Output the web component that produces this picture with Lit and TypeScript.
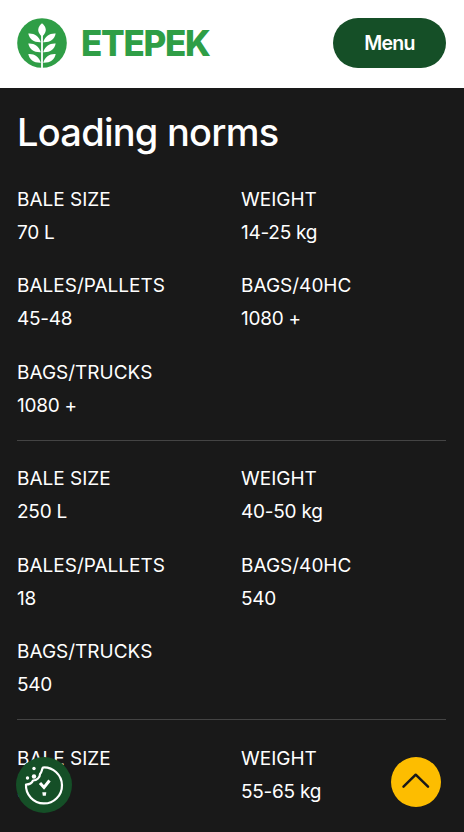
import { LitElement, html, css, svg } from "lit";
import { customElement } from "lit/decorators.js";

const rows = [
  { size: "70 L", weight: "14-25 kg", pallets: "45-48", hc: "1080 +", trucks: "1080 +" },
  { size: "250 L", weight: "40-50 kg", pallets: "18", hc: "540", trucks: "540" },
  { size: "350 L", weight: "55-65 kg", pallets: "18", hc: "540", trucks: "540" },
];

const pair = (y: number) => svg`
  <path transform="translate(0 ${y})" d="M11.300 15.500C17 15 22 18 23.800 24.200C17 24.500 12.500 21.500 11.300 15.500Z" fill="#fff"></path>
  <path transform="translate(50 ${y}) scale(-1 1)" d="M11.300 15.500C17 15 22 18 23.800 24.200C17 24.500 12.500 21.500 11.300 15.500Z" fill="#fff"></path>`;

@customElement("app-root")
export class AppRoot extends LitElement {
  static styles = css`
    :host { display: block; width: 464px; height: 832px; overflow: hidden; position: relative; background: #191919; font-family: Inter, "Noto Sans", sans-serif; color: #fff; }
    header { height: 88px; background: #fff; display: flex; align-items: center; justify-content: space-between; padding: 0 18px 2px 17px; box-sizing: border-box; }
    .brand { display: flex; align-items: center; gap: 14px; }
    .logo { width: 50px; height: 50px; display: block; }
    .name { font-size: 35px; font-weight: 800; color: #2f9e46; letter-spacing: -1.3px; line-height: 1; }
    .menu { width: 113px; height: 50px; border-radius: 25px; background: #154f27; color: #fff; display: flex; align-items: center; justify-content: center; font-size: 19.5px; font-weight: 600; letter-spacing: -0.7px; }
    main { padding: 0 18px 0 17px; }
    h1 { margin: 0; padding-top: 20.5px; font-size: 38px; line-height: 46px; font-weight: 500; letter-spacing: -0.75px; }
    .row { display: grid; grid-template-columns: 224px 1fr; row-gap: 20px; padding: 21.5px 0 17.5px; border-bottom: 1px solid #444; }
    .row:first-of-type { padding-top: 28.1px; }
    .label, .value { font-size: 19px; line-height: 33.25px; font-weight: 400; }
    .label { letter-spacing: 0; }
    .value { letter-spacing: -0.25px; }
    .fab { position: absolute; border-radius: 50%; display: flex; align-items: center; justify-content: center; }
    .cookie { left: 16px; top: 757px; width: 56px; height: 56px; background: #154f27; }
    .top { left: 391px; top: 757px; width: 50px; height: 50px; background: #fdbd00; }
    svg { display: block; }
  `;

  render() {
    return html`
      <header>
        <div class="brand">
          <svg class="logo" viewBox="0 0 50 50">
            <circle cx="25" cy="25" r="24.800" fill="#2f9e46"></circle>
            <rect x="24.100" y="17" width="1.800" height="33" fill="#fff"></rect>
            <path d="M25 5.300C29 8.500 31 13.500 25 18.800C19 13.500 21 8.500 25 5.300Z" fill="#fff"></path>
            ${pair(0)}${pair(10)}${pair(20.500)}
          </svg>
          <span class="name">ETEPEK</span>
        </div>
        <div class="menu">Menu</div>
      </header>
      <main>
        <h1>Loading norms</h1>
        ${rows.map(
          (r) => html`<section class="row">
            <div><div class="label">BALE SIZE</div><div class="value">${r.size}</div></div>
            <div><div class="label">WEIGHT</div><div class="value">${r.weight}</div></div>
            <div><div class="label">BALES/PALLETS</div><div class="value">${r.pallets}</div></div>
            <div><div class="label">BAGS/40HC</div><div class="value">${r.hc}</div></div>
            <div><div class="label">BAGS/TRUCKS</div><div class="value">${r.trucks}</div></div>
          </section>`
        )}
      </main>
      <div class="fab cookie">
        <svg width="56" height="56" viewBox="0 0 56 56" fill="none" stroke="#fff" stroke-width="2.200" stroke-linecap="round" stroke-linejoin="round">
          <path d="M27 10.500A18 18 0 1 1 10 27.500C13 27.500 16 26 17 23.500C21 23.500 24 20.500 24 17C26 15.500 25.500 12.500 27 10.500Z"></path>
          <path d="M24 26L28 30.500L33.500 23.500" stroke-width="3" stroke-linejoin="miter" stroke-linecap="butt"></path>
          <path d="M26.300 35.300H30.300L29.800 38.800H26.800Z" fill="#fff" stroke="none"></path>
          <circle cx="18" cy="11.500" r="1.700" fill="#fff" stroke="none"></circle>
          <circle cx="18" cy="19.500" r="2.200" fill="#fff" stroke="none"></circle>
          <circle cx="11.500" cy="21" r="1.700" fill="#fff" stroke="none"></circle>
        </svg>
      </div>
      <div class="fab top">
        <svg width="50" height="50" viewBox="0 0 50 50" fill="none" stroke="#191919" stroke-width="2.500" stroke-linecap="round" stroke-linejoin="round">
          <path d="M12.500 29.700L24.700 17.700L37 29.700"></path>
        </svg>
      </div>
    `;
  }
}
